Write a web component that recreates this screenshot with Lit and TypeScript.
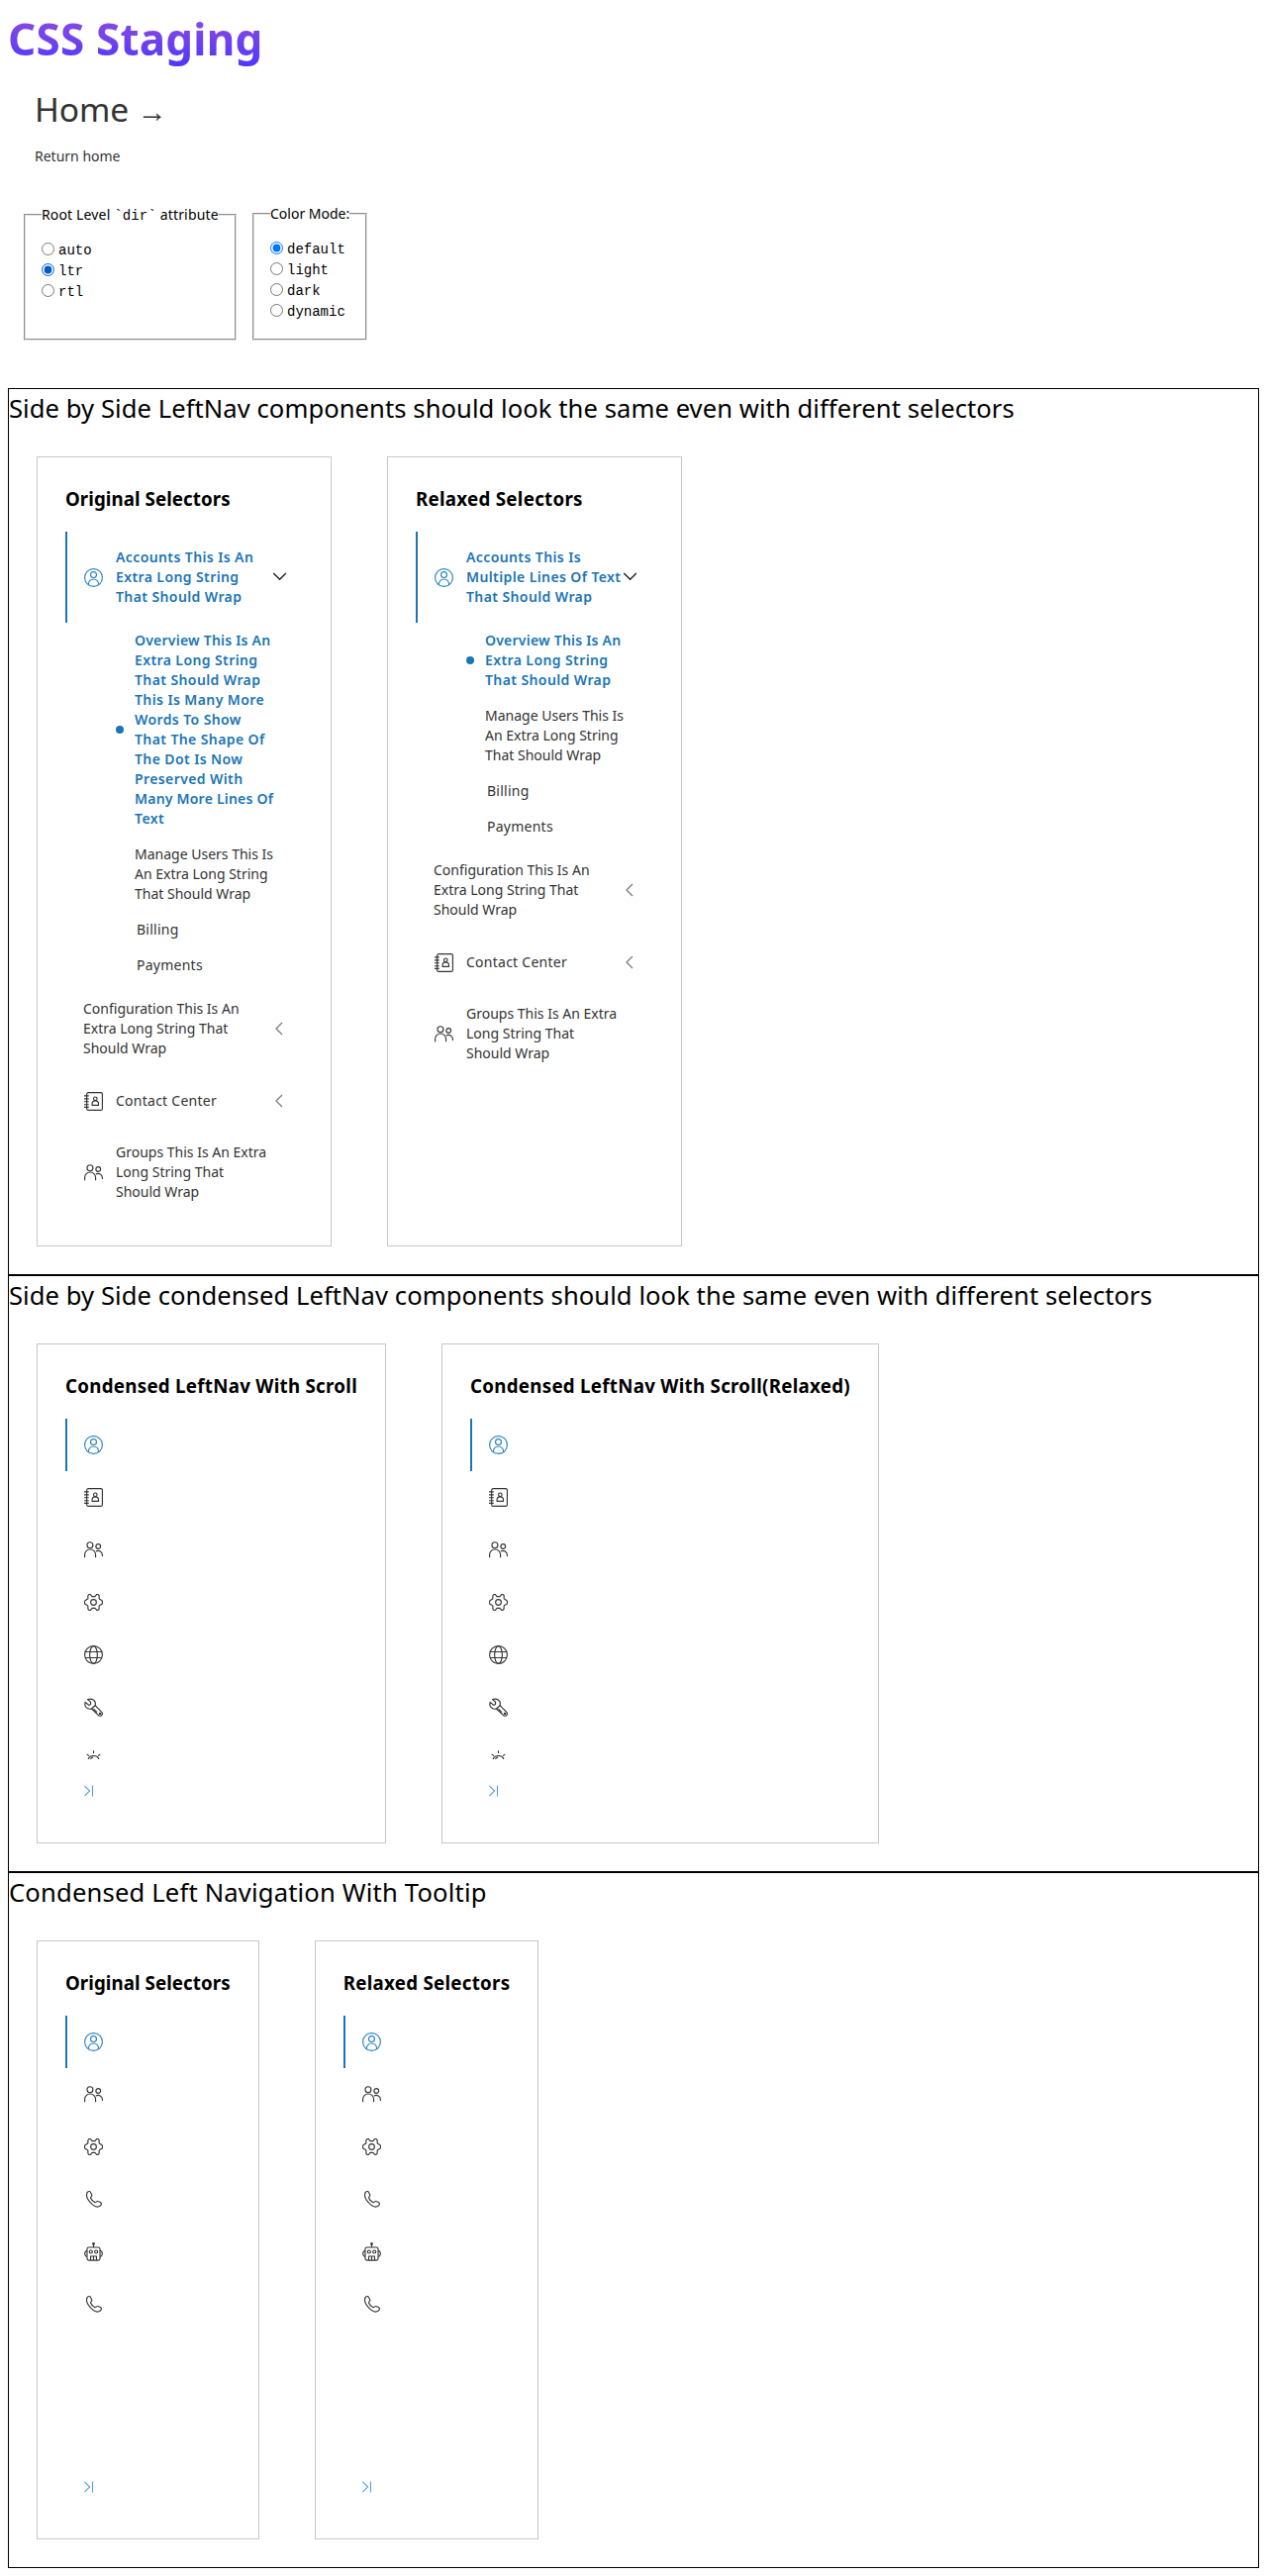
import { LitElement, html, css, svg, nothing } from "lit";
import { customElement, property } from "lit/decorators.js";

const ICONS: Record<string, unknown> = {
  user: svg`<circle cx="16" cy="16" r="15"/><circle cx="16" cy="11" r="5"/><path d="M7.500 28v-1.500a8.500 8 0 0 1 17 0V28"/>`,
  contacts: svg`<rect x="4.500" y="1" width="26.500" height="30" rx="2.500"/><path d="M0 6.500h8M0 11.500h8M0 16.500h8M0 21.500h8M0 26h8"/><circle cx="19" cy="11.500" r="3"/><path d="M13.500 22.500v-2a5.500 5.500 0 0 1 11 0v2z"/>`,
  group: svg`<circle cx="10" cy="8" r="5"/><circle cx="24" cy="10" r="4"/><path d="M1 29v-4.500a9 9 0 0 1 18.500 0V29M20 18.500c5-2.500 11 .5 11 6.500v2"/>`,
  gear: svg`<circle cx="16" cy="16" r="4.800"/><path d="M8.500 2.500h2L13.500 6h5l3-3.500h2l2 2v5l1 1 4 2.500.8 2.800-.8 3-4 2.200-1 1v5l-2 2.300h-2L18.500 26h-5l-3 3.500h-2l-2-2.300v-5l-1-1-4-2.200-.8-3 .8-2.800 4-2.500 1-1v-5z"/>`,
  globe: svg`<circle cx="16" cy="16" r="15"/><ellipse cx="16" cy="16" rx="6.500" ry="15"/><path d="M2 11h28M2 21h28"/>`,
  wrench: svg`<path d="M6 2.500l5 4.500v4l-3 1.500-6-5C-.5 14 5 20.500 12.500 18.500L25 30.200c4 2 7.500-2 5.200-5.500L18.800 13C21 5 14 0 6 2.500z"/><path d="M18.800 13l-6.300 5.500M16 19l6 5.500"/><circle cx="27" cy="27" r="1.200"/>`,
  dial: svg`<path d="M16 .5V5M4.500 6.500l4 3M27.500 6.500l-4 3M6.500 17a9.600 9 0 0 1 19 0v9h-19zM10.500 16.500a6 6 0 0 1 5-5"/>`,
  phone: svg`<path d="M5.500 4c2.500-2.500 5-1.500 6 1l1.500 3.500c1 2.500-2.500 3.500-2 5 1.500 4 4 6.500 7.500 8 1.500.5 3-3 5-2l4 1.500c2.500 1 2.500 4 0 6C18 34 0 14 5.500 4z"/>`,
  robot: svg`<rect x="5" y="8.500" width="22" height="22" rx="3"/><path d="M16 3v5.500M11 30.500v-7h10v7M16 23.500v7M5 14.500H3.500L1.300 17v4l2.200 3H5M27 14.500h1.500l2.200 2.500v4l-2.200 3H27"/><circle cx="11.500" cy="16" r="2.600"/><circle cx="20.500" cy="16" r="2.600"/><circle cx="16" cy="2.500" r="1.500"/>`,
};

@customElement("nav-icon")
class NavIcon extends LitElement {
  @property() name = "user";
  static styles = css`
    :host { display: block; flex: none; width: 19px; height: 19px; }
    .glyph { display: block; width: 19px; height: 19px; fill: none; stroke: currentColor; stroke-width: 1.900; stroke-linejoin: round; }
  `;
  render() {
    return html`<svg class="glyph" viewBox="0 0 32 32">${ICONS[this.name]}</svg>`;
  }
}

interface Item {
  icon?: string;
  text: string;
  active?: boolean;
  open?: boolean;
  chevron?: boolean;
  children?: { text: string; active?: boolean; inset?: boolean }[];
}

const tail = (): Item[] => [
  { text: "Configuration This Is An\nExtra Long String That\nShould Wrap", chevron: true },
  { icon: "contacts", text: "Contact Center", chevron: true },
  { icon: "group", text: "Groups This Is An Extra\nLong String That\nShould Wrap" },
];

const subTail = [
  { text: "Manage Users This Is\nAn Extra Long String\nThat Should Wrap" },
  { text: "Billing", inset: true },
  { text: "Payments", inset: true },
];

const ORIGINAL: Item[] = [
  {
    icon: "user", text: "Accounts This Is An\nExtra Long String\nThat Should Wrap", active: true, open: true,
    children: [
      {
        text: "Overview This Is An\nExtra Long String\nThat Should Wrap\nThis Is Many More\nWords To Show\nThat The Shape Of\nThe Dot Is Now\nPreserved With\nMany More Lines Of\nText",
        active: true,
      },
      ...subTail,
    ],
  },
  ...tail(),
];

const RELAXED: Item[] = [
  {
    icon: "user", text: "Accounts This Is\nMultiple Lines Of Text\nThat Should Wrap", active: true, open: true,
    children: [{ text: "Overview This Is An\nExtra Long String\nThat Should Wrap", active: true }, ...subTail],
  },
  ...tail(),
];

// Lines set tighter, or looser, than the rest of their weight.
const TIGHT = ["Overview This Is An", "Many More Lines Of"];
const LOOSE = ["Contact Center", "Payments", "Billing"];
const lines = (text: string) =>
  text.split("\n").map(
    (l) => html`<span class="line ${TIGHT.includes(l) ? "tight" : LOOSE.includes(l) ? "loose" : ""}">${l}</span>`,
  );

@customElement("left-nav")
class LeftNav extends LitElement {
  @property({ attribute: false }) items: Item[] = [];
  static styles = css`
    :host { display: block; width: 240px; color: #333; font-size: 14px; line-height: 20px; letter-spacing: 0; }
    .item { display: flex; align-items: center; box-sizing: border-box; min-height: 53px; padding: 16px; border-left: 2px solid transparent; }
    .item.active { border-left-color: #1b75b4; }
    .icon { margin: 1px 13px 0 1px; }
    .item.active .icon { color: #2a82c0; }
    .text { flex: 1; min-width: 0; }
    .line { display: block; white-space: nowrap; }
    .loose { letter-spacing: 0.25px; }
    .active .text, .sub.active { color: #1b75b4; font-weight: 600; letter-spacing: 0.4px; }
    .active .tight { letter-spacing: 0.22px; }
    .chevron { flex: none; width: 14px; height: 14px; fill: none; stroke: #777; stroke-width: 1.200; }
    .chevron.open { stroke: #222; stroke-width: 1.400; }
    .sub { display: flex; align-items: center; padding: 8px 0 8px 51px; }
    .dot { width: 8px; height: 8px; margin-right: 11px; border-radius: 50%; }
    .sub.active .dot { background: #1b75b4; }
    .subtext.inset { padding-left: 2px; }
  `;
  render() {
    return this.items.map(
      (i) => html`
        <div class="item ${i.active ? "active" : ""}">
          ${i.icon ? html`<nav-icon class="icon" name=${i.icon}></nav-icon>` : nothing}
          <span class="text">${lines(i.text)}</span>
          ${i.open
            ? html`<svg class="chevron open" viewBox="0 0 14 14"><path d="M.3 3l6.300 6.300L12.900 3"/></svg>`
            : i.chevron
              ? html`<svg class="chevron" viewBox="0 0 14 14"><path d="M9 1L3 7l6 6"/></svg>`
              : nothing}
        </div>
        ${(i.children ?? []).map(
          (c) => html`<div class="sub ${c.active ? "active" : ""}">
            <span class="dot"></span><span class="subtext ${c.inset ? "inset" : ""}">${lines(c.text)}</span>
          </div>`,
        )}
      `,
    );
  }
}

@customElement("condensed-nav")
class CondensedNav extends LitElement {
  @property({ attribute: false }) icons: string[] = [];
  static styles = css`
    :host { display: flex; flex-direction: column; color: #333; }
    .list { flex: 1; min-height: 0; overflow: hidden; }
    .item { display: flex; align-items: center; box-sizing: border-box; height: 53px; padding-left: 17px; border-left: 2px solid transparent; }
    .item.active { border-left-color: #1b75b4; color: #2a82c0; }
    .toggle { display: flex; align-items: center; height: 56px; padding: 4px 0 4px 19px; box-sizing: border-box; }
    .collapse { display: block; width: 11px; height: 12px; margin-top: 8px; fill: none; stroke: #57a0d6; stroke-width: 1.100; }
  `;
  render() {
    return html`
      <div class="list">
        ${this.icons.map((n, i) => html`<div class="item ${i === 0 ? "active" : ""}"><nav-icon name=${n}></nav-icon></div>`)}
      </div>
      <div class="toggle"><svg class="collapse" viewBox="0 0 11 12"><path d="M.4.800L5.600 6 .4 11.200M8.500.5v11"/></svg></div>
    `;
  }
}

const SCROLL = ["user", "contacts", "group", "gear", "globe", "wrench", "dial"];
const TOOLTIP = ["user", "group", "gear", "phone", "robot", "phone"];

@customElement("app-root")
class AppRoot extends LitElement {
  static styles = css`
    :host { display: block; padding: 8px; background: #fff; color: #000; font-family: "Noto Sans", sans-serif; font-size: 14px; line-height: 20px; }
    .top { box-sizing: border-box; height: 384px; }
    .title { margin: 0; width: fit-content; font-size: 44px; font-weight: 700; line-height: 62px; letter-spacing: 0.200px; background: linear-gradient(#984ed8, #4b37ff); -webkit-background-clip: text; background-clip: text; color: transparent; }
    .home { margin: 18px 0 0 27px; color: #333; font-size: 33.600px; line-height: 44px; font-weight: 400; letter-spacing: -0.1px; }
    .arrow { font-size: 30px; line-height: 0; }
    .desc { margin: 16px 0 0 27px; color: #333; }
    .forms { display: flex; align-items: flex-end; gap: 16px; margin: 38px 0 0 16px; }
    .box { box-sizing: border-box; margin: 0; padding: 0 16px; border: 2px groove rgb(225, 225, 225); min-width: 0; }
    .dir { width: 215px; height: 137px; }
    .mode { width: 116px; height: 138px; }
    .legend { padding: 0; letter-spacing: 0.15px; white-space: nowrap; }
    .mode .legend { letter-spacing: 0; }
    .mono { font-family: "Liberation Mono", monospace; line-height: 0; }
    .choices { padding: 15px 0 0; }
    .choice { display: flex; align-items: center; height: 21px; font-family: "Liberation Mono", monospace; font-size: 14px; }
    .radio { width: 13px; height: 13px; margin: 0 4px 3px 0; }
    .dir .radio:checked { accent-color: #005cc8; }
    .panel { border: 1px solid #000; }
    .heading { margin: 0 0 1px; font-size: 25.600px; font-weight: 400; line-height: 39px; letter-spacing: 0.06px; }
    .heading.wide { letter-spacing: 0.170px; }
    .cards { display: flex; gap: 56px; padding: 28px; }
    .card { padding: 28px; border: 1px solid #c8c8c8; }
    .cardtitle { margin: 0; font-size: 18.720px; font-weight: 700; line-height: 28px; padding-bottom: 19px; letter-spacing: 0.285px; white-space: nowrap; }
    .cardtitle.snug { letter-spacing: 0.070px; }
    .short { height: 400px; }
    .tall { height: 500px; }
  `;
  private radios(group: string, names: string[], selected: string) {
    return html`<div class="choices">
      ${names.map((n) => html`<label class="choice"><input class="radio" type="radio" name=${group} ?checked=${n === selected} />${n}</label>`)}
    </div>`;
  }
  private card(title: string, body: unknown) {
    return html`<section class="card"><h3 class="cardtitle ${title.startsWith("Original") ? "snug" : ""}">${title}</h3>${body}</section>`;
  }
  render() {
    return html`
      <header class="top">
        <h1 class="title">CSS Staging</h1>
        <h2 class="home">Home <span class="arrow">→</span></h2>
        <p class="desc">Return home</p>
        <div class="forms">
          <fieldset class="box dir">
            <legend class="legend">Root Level <span class="mono">\`dir\`</span> attribute</legend>
            ${this.radios("dir", ["auto", "ltr", "rtl"], "ltr")}
          </fieldset>
          <fieldset class="box mode">
            <legend class="legend">Color Mode:</legend>
            ${this.radios("mode", ["default", "light", "dark", "dynamic"], "default")}
          </fieldset>
        </div>
      </header>
      <div class="panel">
        <h2 class="heading">Side by Side LeftNav components should look the same even with different selectors</h2>
        <div class="cards">
          ${this.card("Original Selectors", html`<left-nav .items=${ORIGINAL}></left-nav>`)}
          ${this.card("Relaxed Selectors", html`<left-nav .items=${RELAXED}></left-nav>`)}
        </div>
      </div>
      <div class="panel">
        <h2 class="heading">Side by Side condensed LeftNav components should look the same even with different selectors</h2>
        <div class="cards">
          ${this.card("Condensed LeftNav With Scroll", html`<condensed-nav class="short" .icons=${SCROLL}></condensed-nav>`)}
          ${this.card("Condensed LeftNav With Scroll(Relaxed)", html`<condensed-nav class="short" .icons=${SCROLL}></condensed-nav>`)}
        </div>
      </div>
      <div class="panel">
        <h2 class="heading wide">Condensed Left Navigation With Tooltip</h2>
        <div class="cards">
          ${this.card("Original Selectors", html`<condensed-nav class="tall" .icons=${TOOLTIP}></condensed-nav>`)}
          ${this.card("Relaxed Selectors", html`<condensed-nav class="tall" .icons=${TOOLTIP}></condensed-nav>`)}
        </div>
      </div>
    `;
  }
}
